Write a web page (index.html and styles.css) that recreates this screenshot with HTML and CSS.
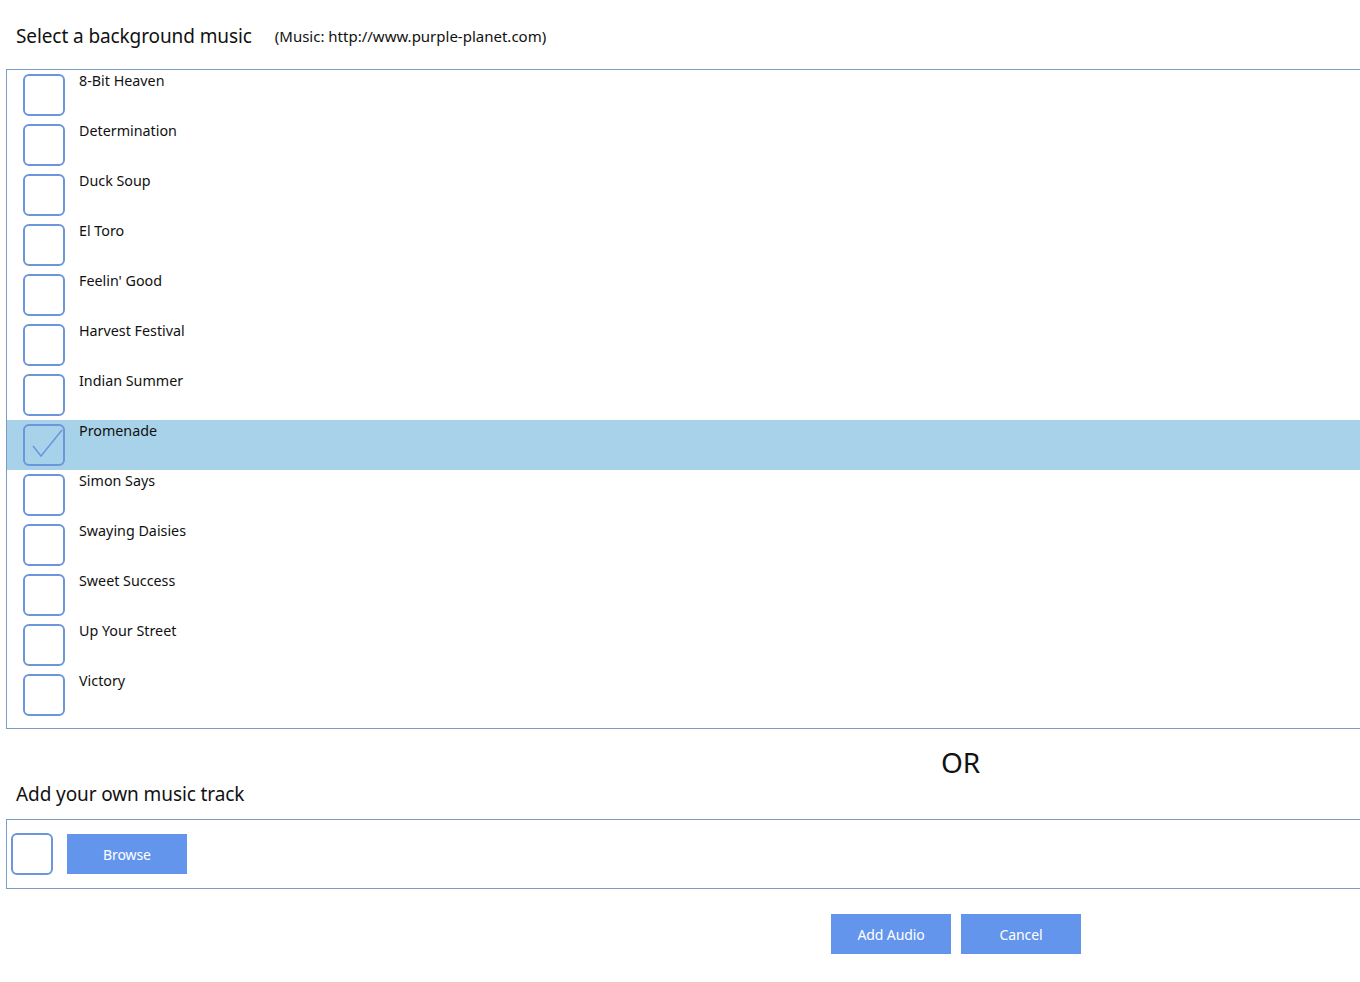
FILE: index.html
```html
<!DOCTYPE html>
<html lang="en">
<head>
    <meta name="viewport" content="width=device-width, initial-scale=1">
    <link rel="stylesheet" href="styles.css">
</head>
<body>

<div class="title-row">
    <h2>Select a background music</h2>
    <span class="credit">(Music: http://www.purple-planet.com)</span>
</div>

<ul class="track-list">
    <li><span class="check"></span><span class="name">8-Bit Heaven</span></li>
    <li><span class="check"></span><span class="name">Determination</span></li>
    <li><span class="check"></span><span class="name">Duck Soup</span></li>
    <li><span class="check"></span><span class="name">El Toro</span></li>
    <li><span class="check"></span><span class="name">Feelin' Good</span></li>
    <li><span class="check"></span><span class="name">Harvest Festival</span></li>
    <li><span class="check"></span><span class="name">Indian Summer</span></li>
    <li class="selected">
        <span class="check">
            <svg width="42" height="42" viewBox="0 0 42 42"><path d="M10 22 L18 32 L39 6" fill="none" stroke="#6b96dc" stroke-width="1.5"/></svg>
        </span>
        <span class="name">Promenade</span>
    </li>
    <li><span class="check"></span><span class="name">Simon Says</span></li>
    <li><span class="check"></span><span class="name">Swaying Daisies</span></li>
    <li><span class="check"></span><span class="name">Sweet Success</span></li>
    <li><span class="check"></span><span class="name">Up Your Street</span></li>
    <li><span class="check"></span><span class="name">Victory</span></li>
</ul>

<div class="or">OR</div>

<h2 class="own-title">Add your own music track</h2>

<div class="own-box">
    <span class="check"></span>
    <span class="btn">Browse</span>
</div>

<div class="actions">
    <span class="btn">Add Audio</span>
    <span class="btn">Cancel</span>
</div>

</body>
</html>
```

FILE: styles.css
```css
body {
    margin: 0;
    font-family: 'Noto Sans', 'Open Sans', sans-serif;
    background-color: #fff;
    color: #111;
    overflow: hidden;
}

/* Header */
.title-row {
    display: flex;
    align-items: center;
    height: 69px;
    padding-left: 16px;
    box-sizing: border-box;
    padding-top: 23px;
    align-content: flex-start;
    flex-wrap: wrap;
}

.title-row h2 {
    margin: 0;
    font-size: 19px;
    line-height: 26px;
    font-weight: normal;
    letter-spacing: -0.1px;
}

.credit {
    margin-left: 23px;
    font-size: 15px;
    line-height: 20px;
    letter-spacing: 0;
}

/* Track list */
.track-list {
    list-style-type: none;
    margin: 0 -20px 0 6px;
    padding: 0 0 8px 0;
    border: 1px solid #7a9cc6;
}

.track-list li {
    display: flex;
    align-items: flex-start;
    height: 50px;
    box-sizing: border-box;
    padding: 4px 0 0 16px;
}

.track-list li.selected {
    background: #a8d2ea;
}

.check {
    display: block;
    width: 42px;
    height: 42px;
    box-sizing: border-box;
    border: 2px solid #6b96dc;
    border-radius: 6px;
    background: #fff;
    position: relative;
    flex-shrink: 0;
}

.selected .check {
    background: transparent;
}

.check svg {
    position: absolute;
    left: -2px;
    top: -2px;
    overflow: visible;
}

.name {
    margin-left: 14px;
    font-size: 14.3px;
    line-height: 14px;
    letter-spacing: 0;
}

/* OR separator */
.or {
    padding-left: 941px;
    margin-top: 16px;
    font-size: 28px;
    line-height: 34px;
}

.own-title {
    margin: 2px 0 0 16px;
    font-size: 19px;
    font-weight: normal;
    line-height: 26px;
    letter-spacing: -0.1px;
}

/* Own track box */
.own-box {
    display: flex;
    align-items: center;
    gap: 14px;
    margin: 12px -20px 0 6px;
    height: 68px;
    padding-left: 4px;
    border: 1px solid #7a9cc6;
}

.btn {
    display: flex;
    align-items: center;
    justify-content: center;
    width: 120px;
    height: 40px;
    background-color: #6495ed;
    color: #fff;
    font-size: 14px;
    letter-spacing: -0.1px;
}

.actions {
    display: flex;
    gap: 10px;
    margin-top: 25px;
    padding-left: 831px;
}
```
